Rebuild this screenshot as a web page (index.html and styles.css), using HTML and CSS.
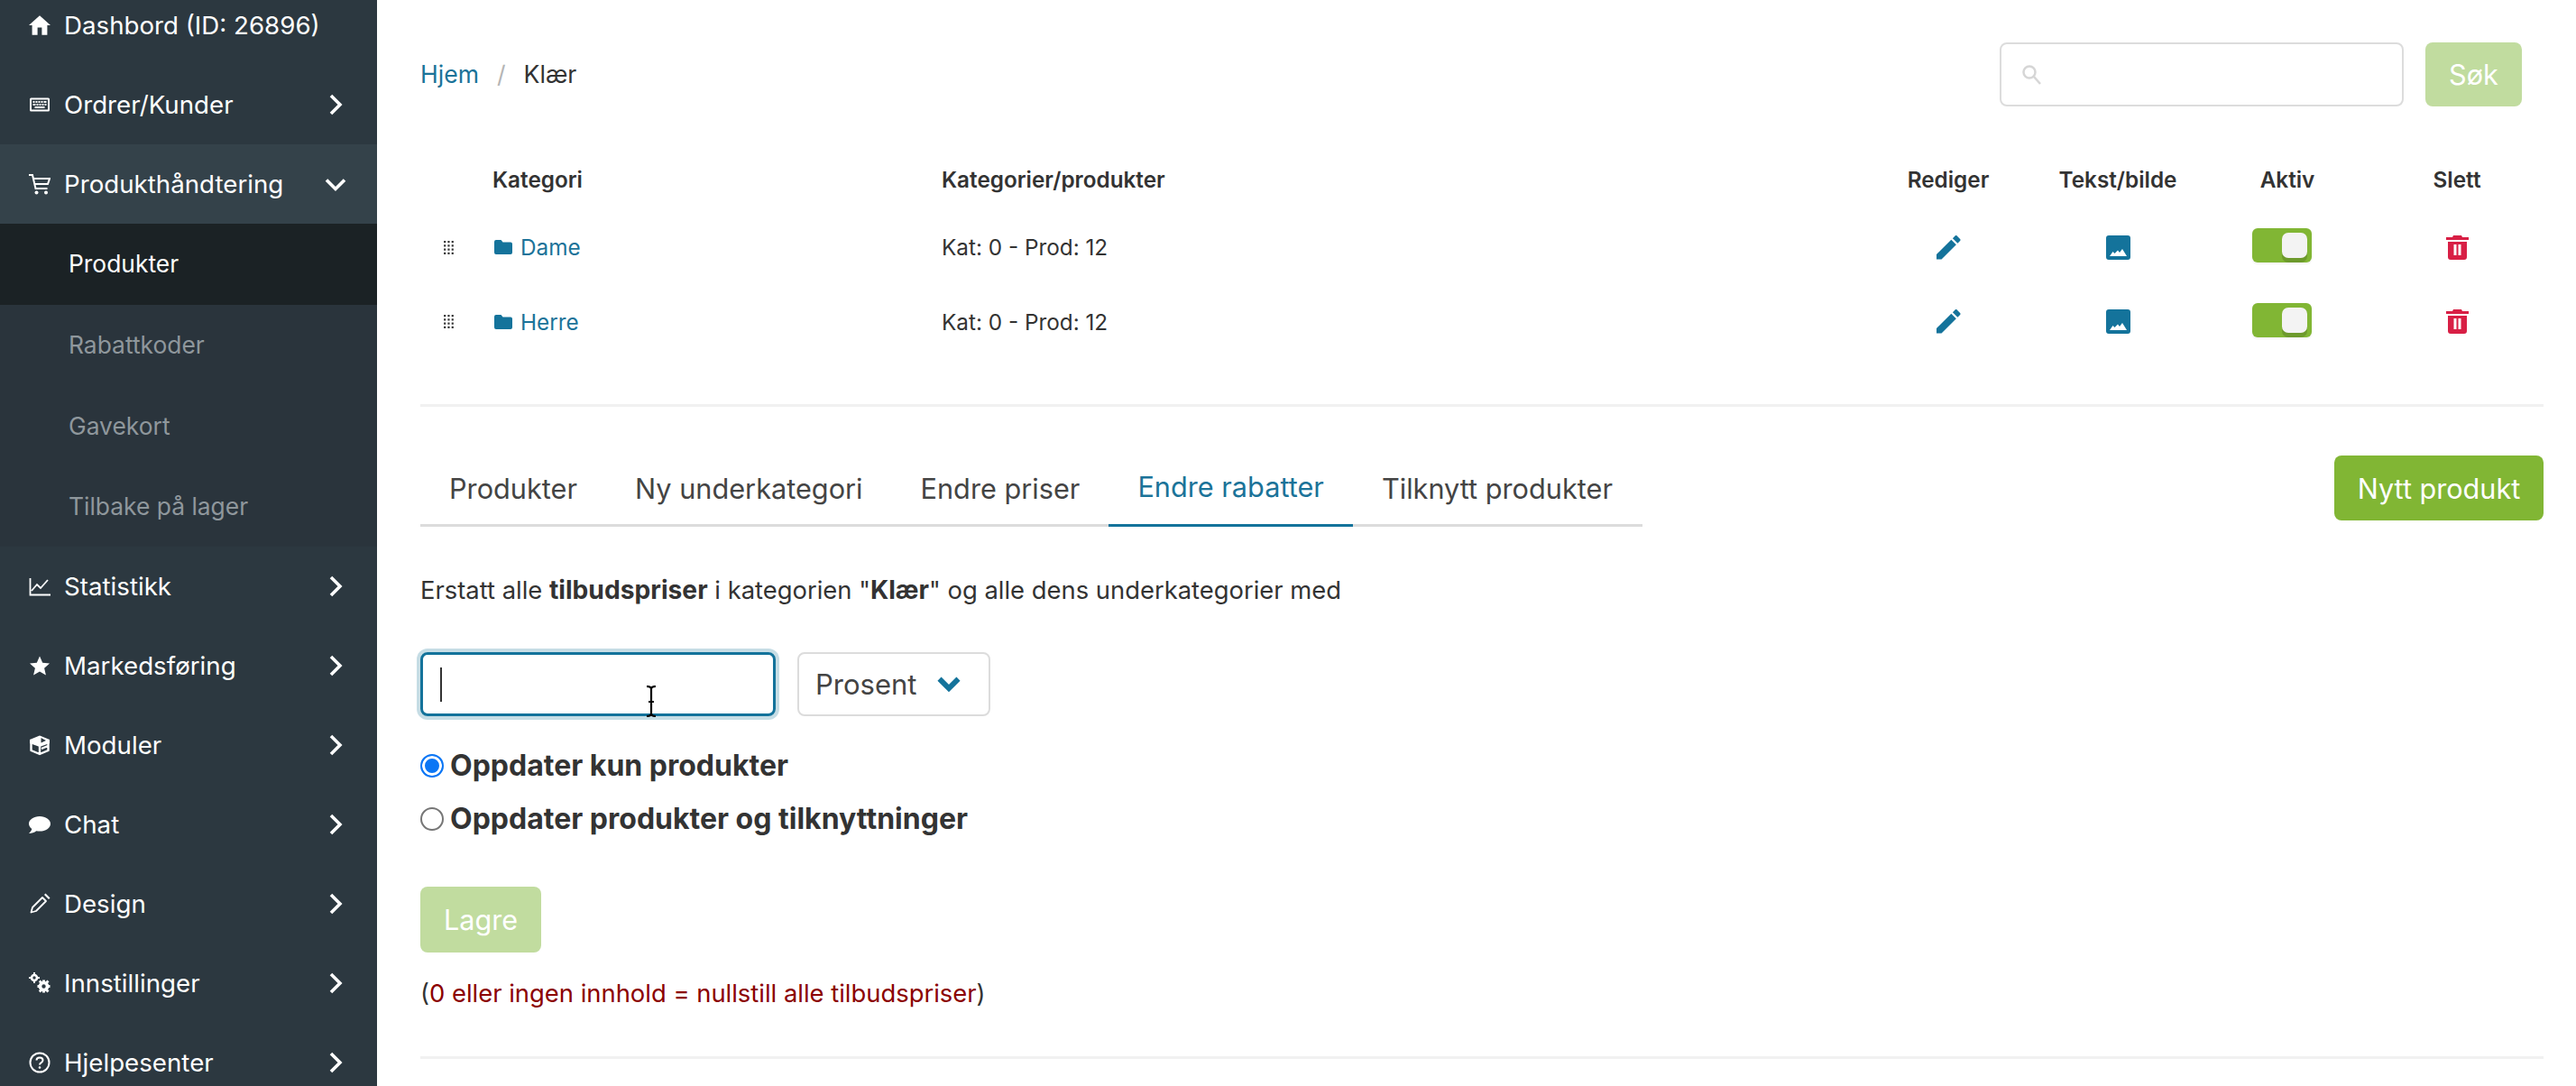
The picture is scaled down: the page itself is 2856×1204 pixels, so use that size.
FILE: index.html
```html
<!DOCTYPE html>
<html lang="no">
<head>
<meta charset="utf-8">
<title>Kategorier</title>
<link rel="stylesheet" href="styles.css">
</head>
<body>
<div class="app">
  <nav class="sidebar">
    <ul class="menu">
      <li class="item first"><svg class="ico" viewBox="2 3 20 18"><path d="M10 21v-7h4v7h5v-9h3L12 3 2 12h3v9z"/></svg><span>Dashbord (ID: 26896)</span></li>
      <li class="item"><svg class="ico" viewBox="0 0 24 24"><path fill-rule="evenodd" d="M2.500 4.500h19A1.500 1.500 0 0 1 23 6v12a1.500 1.500 0 0 1-1.500 1.500h-19A1.500 1.500 0 0 1 1 18V6a1.500 1.500 0 0 1 1.500-1.500zM3 6.500v11h18v-11z"/><path d="M4.500 8h2v2h-2zM7.500 8h2v2h-2zM10.500 8h2v2h-2zM13.500 8h2v2h-2zM16.500 8h3v2h-3zM4.500 11h3v2h-3zM8.500 11h2v2h-2zM11.500 11h2v2h-2zM14.500 11h2v2h-2zM17.500 11h2v2h-2zM6.500 14h11v2h-11z"/></svg><span>Ordrer/Kunder</span><svg class="chev" viewBox="0 0 18 26"><path d="M3 3l10 10L3 23"/></svg></li>
      <li class="item open"><svg class="ico" viewBox="0 0 24 24"><path fill="none" stroke="#fff" stroke-width="2" d="M0 2h4l3.500 15h13M5 6h18l-2 6H6.500"/><circle cx="8.500" cy="21.500" r="2"/><circle cx="19" cy="21.500" r="2"/></svg><span>Produkthåndtering</span><svg class="chev down" viewBox="0 0 24 16"><path d="M2 2.500l10 10 10-10"/></svg></li>
      <li class="sub active">Produkter</li>
      <li class="sub">Rabattkoder</li>
      <li class="sub">Gavekort</li>
      <li class="sub">Tilbake på lager</li>
      <li class="item"><svg class="ico" viewBox="0 0 24 24"><path fill="none" stroke="#fff" stroke-width="1.800" d="M1.500 3v18.500H24M3 17l6-7 4 4 8-9"/></svg><span>Statistikk</span><svg class="chev" viewBox="0 0 18 26"><path d="M3 3l10 10L3 23"/></svg></li>
      <li class="item"><svg class="ico" viewBox="0 0 24 24"><path d="M12 1.500l3.200 7.300 7.800.8-5.900 5.200 1.800 7.700L12 18.400l-6.900 4.100 1.800-7.700L1 9.600l7.800-.8z"/></svg><span>Markedsføring</span><svg class="chev" viewBox="0 0 18 26"><path d="M3 3l10 10L3 23"/></svg></li>
      <li class="item"><svg class="ico" viewBox="0 0 24 24"><path fill="#fff" d="M12 1.500L23 6v4L12 14 1 10V6z"/><path fill="#2c3840" d="M13.500 4l5.500 3-5.500 2.500z"/><path fill="none" stroke="#fff" stroke-width="2.400" stroke-linejoin="round" d="M2.500 8v10l9.500 4 9.500-4V8M12 12.500V21M14 16l7-3"/></svg><span>Moduler</span><svg class="chev" viewBox="0 0 18 26"><path d="M3 3l10 10L3 23"/></svg></li>
      <li class="item"><svg class="ico" viewBox="0 0 24 24"><path d="M12 3c6.600 0 12 3.700 12 8.300s-5.400 8.300-12 8.300c-1.300 0-2.500-.1-3.700-.4C6 21 3 22 0 22c1.700-1.500 3-3.300 3.300-5C1.200 15.500 0 13.500 0 11.300 0 6.700 5.400 3 12 3z"/></svg><span>Chat</span><svg class="chev" viewBox="0 0 18 26"><path d="M3 3l10 10L3 23"/></svg></li>
      <li class="item"><svg class="ico" viewBox="0 0 24 24"><path fill="none" stroke="#fff" stroke-width="1.800" stroke-linejoin="round" d="M2.500 21.500l1.500-5.500L15 5l4 4L8 20z"/><path d="M17 2l1.500-1.500 5 5L22 7z"/></svg><span>Design</span><svg class="chev" viewBox="0 0 18 26"><path d="M3 3l10 10L3 23"/></svg></li>
      <li class="item"><svg class="ico" viewBox="0 0 24 24"><circle cx="6" cy="6" r="3" fill="none" stroke="#fff" stroke-width="2.600"/><path d="M5 0h2v2H5zM5 10h2v2H5zM0 5h2v2H0zM10 5h2v2h-2z"/><circle cx="16.500" cy="15.500" r="4" fill="none" stroke="#fff" stroke-width="3.600"/><path d="M15 8.500h3v2.500h-3zM15 20h3v2.500h-3zM9.500 14h2.500v3H9.500zM21 14h2.500v3H21zM10.800 10.500l2-2 2 2-2 2zM18.500 10.500l2-2 2 2-2 2zM10.800 20.500l2-2 2 2-2 2zM18.500 20.500l2-2 2 2-2 2z"/></svg><span>Innstillinger</span><svg class="chev" viewBox="0 0 18 26"><path d="M3 3l10 10L3 23"/></svg></li>
      <li class="item"><svg class="ico" viewBox="0 0 24 24"><circle cx="12" cy="12" r="10.500" fill="none" stroke="#fff" stroke-width="2"/><path fill="none" stroke="#fff" stroke-width="2" d="M8.500 9.500C8.500 7.500 10 6.500 12 6.500s3.500 1.200 3.500 3c0 2.800-3.500 2.500-3.500 5"/><circle cx="12" cy="17.500" r="1.300"/></svg><span>Hjelpesenter</span><svg class="chev" viewBox="0 0 18 26"><path d="M3 3l10 10L3 23"/></svg></li>
    </ul>
  </nav>

  <main class="content">
    <header class="topbar">
      <div class="crumbs"><a class="link">Hjem</a><span class="sep">/</span><span>Klær</span></div>
      <div class="search">
        <div class="searchbox"><svg class="searchico" viewBox="0 0 24 24"><circle cx="10" cy="9" r="6.500"/><path d="M15 14l7 8"/></svg></div>
        <button class="btn soft sok">Søk</button>
      </div>
    </header>

    <section class="cats">
      <div class="row head">
        <span></span><span>Kategori</span><span>Kategorier/produkter</span>
        <span class="c">Rediger</span><span class="c">Tekst/bilde</span><span class="c">Aktiv</span><span class="c">Slett</span>
      </div>
      <div class="row">
        <svg class="grip" viewBox="0 0 11 14"><path d="M0 0h2v2H0zM4 0h2v2H4zM8 0h2v2H8zM0 4h2v2H0zM4 4h2v2H4zM8 4h2v2H8zM0 8h2v2H0zM4 8h2v2H4zM8 8h2v2H8zM0 12h2v2H0zM4 12h2v2H4zM8 12h2v2H8z"/></svg>
        <a class="link cat"><svg class="folder" viewBox="0 0 20 16"><path d="M2 0h5.500l2 2.500H18a2 2 0 0 1 2 2V14a2 2 0 0 1-2 2H2a2 2 0 0 1-2-2V2a2 2 0 0 1 2-2z"/></svg>Dame</a>
        <span>Kat: 0 - Prod: 12</span>
        <span class="c"><svg class="act blue pen" viewBox="3 3 18.300 18.300"><path d="M3 17.250V21h3.750L17.810 9.940l-3.750-3.750L3 17.250zM20.710 7.040c.39-.39.39-1.020 0-1.410l-2.340-2.340c-.39-.39-1.020-.39-1.410 0l-1.830 1.830 3.750 3.750 1.830-1.830z"/></svg></span>
        <span class="c"><svg class="act blue" viewBox="0 0 27 27"><path fill-rule="evenodd" d="M3 0h21a3 3 0 0 1 3 3v21a3 3 0 0 1-3 3H3a3 3 0 0 1-3-3V3a3 3 0 0 1 3-3zM4 23h19l-5-8-3 4-2-2.500-3.500 3.500-2-2z"/></svg></span>
        <span class="c"><span class="toggle"><span class="thumb"></span></span></span>
        <span class="c"><svg class="act red" viewBox="0 0 25 27"><path fill-rule="evenodd" d="M8 0h9l1 2h7v3H0V2h7zM2 7h21v17a3 3 0 0 1-3 3H5a3 3 0 0 1-3-3zM8.500 10v12h3V10zM13.500 10v12h3V10z"/></svg></span>
      </div>
      <div class="row">
        <svg class="grip" viewBox="0 0 11 14"><path d="M0 0h2v2H0zM4 0h2v2H4zM8 0h2v2H8zM0 4h2v2H0zM4 4h2v2H4zM8 4h2v2H8zM0 8h2v2H0zM4 8h2v2H4zM8 8h2v2H8zM0 12h2v2H0zM4 12h2v2H4zM8 12h2v2H8z"/></svg>
        <a class="link cat"><svg class="folder" viewBox="0 0 20 16"><path d="M2 0h5.500l2 2.500H18a2 2 0 0 1 2 2V14a2 2 0 0 1-2 2H2a2 2 0 0 1-2-2V2a2 2 0 0 1 2-2z"/></svg>Herre</a>
        <span>Kat: 0 - Prod: 12</span>
        <span class="c"><svg class="act blue pen" viewBox="3 3 18.300 18.300"><path d="M3 17.250V21h3.750L17.810 9.940l-3.750-3.750L3 17.250zM20.710 7.040c.39-.39.39-1.020 0-1.410l-2.340-2.340c-.39-.39-1.020-.39-1.410 0l-1.830 1.830 3.750 3.750 1.830-1.830z"/></svg></span>
        <span class="c"><svg class="act blue" viewBox="0 0 27 27"><path fill-rule="evenodd" d="M3 0h21a3 3 0 0 1 3 3v21a3 3 0 0 1-3 3H3a3 3 0 0 1-3-3V3a3 3 0 0 1 3-3zM4 23h19l-5-8-3 4-2-2.500-3.500 3.500-2-2z"/></svg></span>
        <span class="c"><span class="toggle"><span class="thumb"></span></span></span>
        <span class="c"><svg class="act red" viewBox="0 0 25 27"><path fill-rule="evenodd" d="M8 0h9l1 2h7v3H0V2h7zM2 7h21v17a3 3 0 0 1-3 3H5a3 3 0 0 1-3-3zM8.500 10v12h3V10zM13.500 10v12h3V10z"/></svg></span>
      </div>
    </section>

    <hr class="rule">

    <div class="tabbar">
      <ul class="tabs">
        <li>Produkter</li>
        <li>Ny underkategori</li>
        <li>Endre priser</li>
        <li class="on">Endre rabatter</li>
        <li>Tilknytt produkter</li>
      </ul>
      <button class="btn new">Nytt produkt</button>
    </div>

    <p class="lead">Erstatt alle <b>tilbudspriser</b> i kategorien "<b>Klær</b>" og alle dens underkategorier med</p>

    <div class="fields">
      <div class="input"><span class="caret"></span>
        <svg class="ibeam" viewBox="0 0 14 35"><path d="M2 1c3 0 5 1 5 3v27c0 2-2 3-5 3M12 1c-3 0-5 1-5 3v27c0 2 2 3 5 3M4 18h6"/></svg>
      </div>
      <div class="select"><span>Prosent</span><svg class="selchev" viewBox="0 0 24 16"><path d="M3 3l9 9 9-9"/></svg></div>
    </div>

    <label class="radio"><span class="dot checked"></span>Oppdater kun produkter</label>
    <label class="radio"><span class="dot"></span>Oppdater produkter og tilknyttninger</label>

    <button class="btn soft save">Lagre</button>

    <p class="note">(<span class="dark">0 eller ingen innhold = nullstill alle tilbudspriser</span>)</p>

    <hr class="rule last">
  </main>
</div>
</body>
</html>
```

FILE: styles.css
```css
* { box-sizing: border-box; }
html, body { margin: 0; height: 100%; overflow: hidden; background: #fff; }
body { font-family: Inter, "Noto Sans", sans-serif; font-size: 26px; color: #333; }
.app { display: flex; height: 1204px; overflow: hidden; }

.sidebar { width: 418px; flex: none; background: #2c3840; overflow: hidden; }
.menu { list-style: none; margin: -16px 0 0; padding: 0; }
.item { height: 88px; display: flex; align-items: center; padding: 0 0 0 32px; color: #fff; font-size: 27.700px; position: relative; }
.item span { margin-left: 15px; }
.ico { width: 24px; height: 24px; fill: #fff; flex: none; }
.chev { position: absolute; left: 364px; top: 31px; width: 18px; height: 26px; fill: none; stroke: #fff; stroke-width: 3.600; }
.chev.down { left: 360px; top: 37px; width: 24px; height: 16px; }
.open { background: #34424a; }
.sub { height: 89.500px; display: flex; align-items: center; padding-left: 76px; color: #8f979c; font-size: 26.400px; background: #2a343c; }
.sub.active { background: #1b2225; color: #fff; padding-bottom: 2px; }

.content { flex: 1; min-width: 0; padding: 47px 36px 0 48px; }
.link { color: #1b7399; }
.topbar { display: flex; justify-content: space-between; align-items: center; height: 71px; }
.crumbs { display: flex; align-items: center; font-size: 26.600px; margin-top: -1px; }
.sep { color: #b5b5b5; margin: 0 20px; }
.search { display: flex; gap: 24px; margin-right: 24px; }
.searchbox { width: 448px; height: 71px; border: 2px solid #dcdcdc; border-radius: 8px; display: flex; align-items: center; padding-left: 21px; }
.searchico { width: 24px; height: 24px; fill: none; stroke: #d6d6d6; stroke-width: 2.500; }
.btn { border: 0; border-radius: 8px; font-family: inherit; color: #fff; background: #81b634; font-size: 30.600px; padding: 0; }
.btn.soft { background: #c1dc9f; }
.sok { width: 107px; height: 71px; }

.cats { margin-top: 47px; }
.row { display: grid; grid-template-columns: 80px 498px 1fr 188px 188px 188px 188px 2px; align-items: center; height: 82.500px; font-size: 24.300px; }
.row.head { height: 68px; font-weight: 600; }
.c { display: flex; justify-content: center; }
.grip { width: 12px; height: 15px; margin-left: 26px; fill: #333; }
.cat { display: flex; align-items: center; font-size: 24.300px; }
.folder { width: 20px; height: 16px; fill: #14739b; margin: 0 9px 0 2px; }
.act { width: 27px; height: 27px; }
.blue { fill: #14739b; }
.red { fill: #d81f45; width: 25px; }
.pen { width: 27px; }
.toggle { width: 66px; height: 38px; margin: -4px 13px 0 0; background: #81b634; border-radius: 6px; display: block; position: relative; box-shadow: 0 2px 2px rgba(0,0,0,.05); }
.thumb { position: absolute; left: 33px; top: 5px; width: 28px; height: 28px; background: #f3f3f3; border-radius: 7px; box-shadow: 0 5px 0 #6d9a2c; display: block; }

.rule { border: 0; height: 3px; background: #f1f1f1; margin: 50px 0 0; }
.rule.last { margin-top: 54px; }

.tabbar { display: flex; justify-content: space-between; align-items: center; margin-top: 47px; height: 86px; }
.tabs { list-style: none; margin: 0; padding: 0; display: flex; width: 1355px; height: 86px; border-bottom: 3px solid #dcdcdc; font-size: 30.700px; color: #444; }
.tabs li { padding: 0 32px; display: flex; align-items: center; height: 86px; flex: none; white-space: nowrap; }
.tabs li.on { color: #1b7399; border-bottom: 3px solid #14739b; }
.new { width: 232px; height: 72px; }

.lead { margin: 54px 0 0; font-size: 27.400px; line-height: 32px; }
.lead b { font-weight: 700; font-size: 28.200px; }

.fields { display: flex; gap: 24px; margin-top: 53px; }
.input { width: 394px; height: 71px; border: 3px solid #14739b; border-radius: 8px; box-shadow: 0 0 0 4px #c6dde5; position: relative; }
.caret { position: absolute; left: 19px; top: 14px; width: 2px; height: 38px; background: #333; }
.ibeam { position: absolute; left: 246px; top: 34px; width: 14px; height: 35px; fill: none; stroke: #000; stroke-width: 2.200; }
.select { width: 214px; height: 71px; border: 2px solid #dcdcdc; border-radius: 8px; display: flex; align-items: center; padding-left: 18px; font-size: 31px; color: #444; }
.selchev { width: 28px; height: 19px; margin-left: 22px; fill: none; stroke: #14739b; stroke-width: 5; }

.radio { display: flex; align-items: center; font-size: 32px; font-weight: 700; height: 59px; }
.fields + .radio { margin-top: 25px; }
.dot { width: 26px; height: 26px; border-radius: 50%; border: 2px solid #767676; margin-right: 7px; background: #fff; flex: none; }
.dot.checked { border: 2px solid #0b76f5; box-shadow: inset 0 0 0 3px #fff; background: #0b76f5; }

.save { display: block; width: 134px; height: 73px; margin-top: 46px; }
.note { margin: 29px 0 0; font-size: 27.400px; line-height: 32px; }
.dark { color: #8b0000; }
```
